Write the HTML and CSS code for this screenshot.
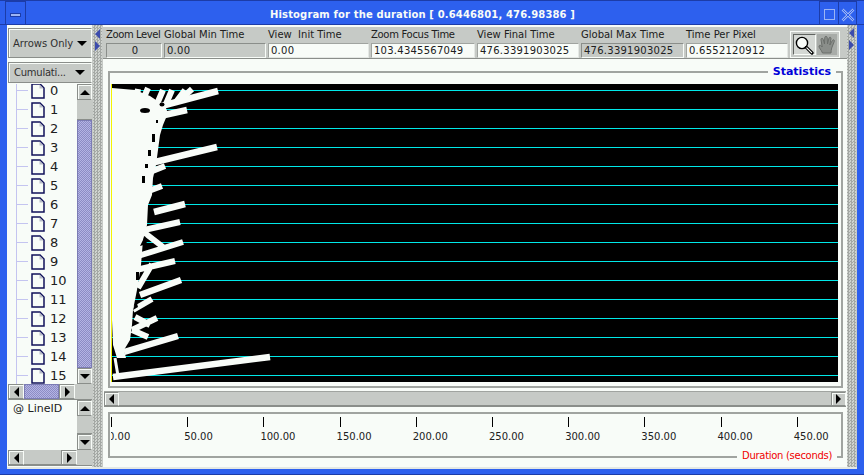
FILE: index.html
```html
<!DOCTYPE html>
<html lang="en">
<head>
<meta charset="utf-8">
<title>Histogram for the duration</title>
<link rel="stylesheet" href="styles.css">
</head>
<body>
<svg class="defs" width="0" height="0">
  <symbol id="file" viewBox="0 0 14 16">
    <path d="M1 .9H9L13 5V15.100H1Z" fill="#f8fcf8" stroke="#10105a" stroke-width="1.500"/>
    <path d="M8.500 1.500 12.500 5.500H8.500Z" fill="#b8bcc8"/>
  </symbol>
</svg>
<div class="window">
  <header class="titlebar">
    <div class="tb-menu"><span class="tb-menu-glyph"></span></div>
    <div class="tb-title">Histogram for the duration [ 0.6446801, 476.98386 ]</div>
    <div class="tb-box"><span class="tb-max"></span></div>
    <div class="tb-box">
      <svg width="14" height="14" viewBox="0 0 14 14"><path d="M1.500 1.500 12.500 12.500M12.500 1.500 1.500 12.500" stroke="#9cb4f4" stroke-width="2.600" fill="none"/><path d="M1.500 1.500 12.500 12.500M12.500 1.500 1.500 12.500" stroke="#2d60ee" stroke-width="1" fill="none"/></svg>
    </div>
  </header>
  <div class="client">
    <aside class="left">
      <div class="combo combo-tall"><span>Arrows Only</span><i class="tri-down big"></i></div>
      <div class="combo combo-short"><span class="cumul">Cumulati...</span><i class="tri-down big"></i></div>
      <div class="pane tree-pane">
        <div class="tree">
          <div class="tree-row"><svg class="fileicon"><use href="#file"/></svg><span>0</span></div>
          <div class="tree-row"><svg class="fileicon"><use href="#file"/></svg><span>1</span></div>
          <div class="tree-row"><svg class="fileicon"><use href="#file"/></svg><span>2</span></div>
          <div class="tree-row"><svg class="fileicon"><use href="#file"/></svg><span>3</span></div>
          <div class="tree-row"><svg class="fileicon"><use href="#file"/></svg><span>4</span></div>
          <div class="tree-row"><svg class="fileicon"><use href="#file"/></svg><span>5</span></div>
          <div class="tree-row"><svg class="fileicon"><use href="#file"/></svg><span>6</span></div>
          <div class="tree-row"><svg class="fileicon"><use href="#file"/></svg><span>7</span></div>
          <div class="tree-row"><svg class="fileicon"><use href="#file"/></svg><span>8</span></div>
          <div class="tree-row"><svg class="fileicon"><use href="#file"/></svg><span>9</span></div>
          <div class="tree-row"><svg class="fileicon"><use href="#file"/></svg><span>10</span></div>
          <div class="tree-row"><svg class="fileicon"><use href="#file"/></svg><span>11</span></div>
          <div class="tree-row"><svg class="fileicon"><use href="#file"/></svg><span>12</span></div>
          <div class="tree-row"><svg class="fileicon"><use href="#file"/></svg><span>13</span></div>
          <div class="tree-row"><svg class="fileicon"><use href="#file"/></svg><span>14</span></div>
          <div class="tree-row"><svg class="fileicon"><use href="#file"/></svg><span>15</span></div>
        </div>
        <div class="vbar">
          <div class="sb-btn"><i class="tri-up"></i></div>
          <div class="sb-gap gap-20"></div>
          <div class="sb-thumb grow"></div>
          <div class="sb-btn"><i class="tri-down"></i></div>
        </div>
      </div>
      <div class="hbar-row">
        <div class="sb-btn h"><i class="tri-left"></i></div>
        <div class="sb-thumb thumb-h"></div>
        <div class="sb-btn h"><i class="tri-right"></i></div>
      </div>
      <div class="pane list-pane">
        <div class="list">@ LineID</div>
        <div class="vbar">
          <div class="sb-btn"><i class="tri-up"></i></div>
          <div class="sb-gap grow"></div>
          <div class="sb-btn"><i class="tri-down"></i></div>
        </div>
      </div>
      <div class="hbar-row">
        <div class="sb-btn h"><i class="tri-left"></i></div>
        <div class="sb-gap grow"></div>
        <div class="sb-btn h"><i class="tri-right"></i></div>
      </div>
    </aside>

    <div class="splitter"><i class="sp-left"></i><i class="sp-right"></i></div>

    <main class="main">
      <section class="toolbar">
        <div class="fields">
          <div class="field"><label class="tight">Zoom Level</label><output class="val gray center">0</output></div>
          <div class="field"><label>Global Min Time</label><output class="val gray">0.00</output></div>
          <div class="field"><label>View&nbsp; Init Time</label><output class="val">0.00</output></div>
          <div class="field"><label class="tight-2">Zoom Focus Time</label><output class="val">103.4345567049</output></div>
          <div class="field"><label>View Final Time</label><output class="val">476.3391903025</output></div>
          <div class="field"><label>Global Max Time</label><output class="val gray">476.3391903025</output></div>
          <div class="field"><label>Time Per Pixel</label><output class="val">0.6552120912</output></div>
        </div>
        <div class="tools">
          <div class="tool tool-on">
            <svg width="20" height="20" viewBox="0 0 20 20"><circle cx="8" cy="8" r="5.600" fill="#f8fcf8" stroke="#000" stroke-width="1.400"/><path d="M12.400 12.400 18 18" stroke="#000" stroke-width="3.200" stroke-linecap="round"/><path d="M12.800 12.800 17.600 17.600" stroke="#f8fcf8" stroke-width="1.200" stroke-linecap="round"/></svg>
          </div>
          <div class="tool tool-off">
            <svg width="20" height="20" viewBox="0 0 20 20"><path d="M5.500 18C4.500 15 1.500 12.500 2 11S4.500 10.500 5.200 12L4 4.500C4 3 6 3 6.300 4.500L7.500 9 7.800 2.500C8 1 10 1 10.200 2.500L10.500 9 12 3C12.500 1.700 14.300 2.200 14 3.700L12.800 10 15.500 5.300C16.300 4.200 17.800 5 17.300 6.300L14.700 13C14.200 15 14 16.500 14 18Z" fill="#8a8e8a" stroke="#6a6e6a" stroke-width="1"/></svg>
          </div>
        </div>
      </section>

      <section class="box stats-box">
        <span class="legend legend-stats">Statistics</span>
        <svg class="chart" width="727" height="298" viewBox="111 84 727 298">
          <rect x="111" y="84" width="727" height="298" fill="#000"/>
          <g stroke="#00e8e8" stroke-width="1">
            <path d="M111 90.500H838M111 109.500H838M111 128.500H838M111 147.500H838M111 166.500H838M111 185.500H838M111 204.500H838M111 223.500H838M111 242.500H838M111 261.500H838M111 280.500H838M111 299.500H838M111 318.500H838M111 337.500H838M111 356.500H838M111 375.500H838"/>
          </g>
          <path d="M112 88 135 90 150 96 165 106 168 113 163 125 160 135 158 150 156 165 153 178 152 195 148 205 147 225 143 240 141 265 137 290 133 310 132 325 130 340 124 350 126 358 117 358 113 345 112 320Z" fill="#f8fcf8"/>
          <g stroke="#f8fcf8" fill="none" stroke-linecap="butt">
            <path stroke-width="6.500" d="M218 91 150 109M187 110 160 116M217 147 155 162M185 204 154 212M181 280 140 295M178 336 124 352M270 357 113 377"/>
            <path stroke-width="6" d="M148 88 141 104M163 90 157 104M172 90 166 104M185 90 176 102M192 89 180 100M138 89 136 102M165 166 150 172M162 186 146 192M180 222 135 232M183 242 138 256M141 230 163 247M175 261 136 270M152 264 138 288M152 299 133 310M157 318 132 330M135 317 150 325M148 337 132 330"/>
            <path stroke-width="3" d="M115 358 118 376"/>
          </g>
          <g fill="#000">
            <ellipse cx="145" cy="110.500" rx="5" ry="2.500"/>
            <ellipse cx="162" cy="104.500" rx="2.500" ry="2"/>
            <rect x="156" y="120" width="2" height="3"/>
            <rect x="152" y="134" width="3" height="8"/>
            <rect x="148" y="150" width="3" height="6"/>
            <rect x="145" y="164" width="3" height="4"/>
            <rect x="142" y="176" width="3" height="7"/>
            <rect x="136" y="272" width="3" height="8"/>
            <path d="M145 236 140 246 147 244Z"/>
            <path d="M136 300 133 310 138 307Z"/>
          </g>
          <rect x="111" y="84" width="1" height="298" fill="#f4f400"/>
        </svg>
      </section>

      <div class="hbar-main">
        <div class="sb-btn h wide"><i class="tri-left"></i></div>
        <div class="sb-gap grow"></div>
        <div class="sb-btn h wide"><i class="tri-right"></i></div>
      </div>

      <section class="box axis-box">
        <span class="legend legend-axis">Duration (seconds)</span>
        <div class="axis">
          <div class="tick"><b></b><span>0.00</span></div>
          <div class="tick"><b></b><span>50.00</span></div>
          <div class="tick"><b></b><span>100.00</span></div>
          <div class="tick"><b></b><span>150.00</span></div>
          <div class="tick"><b></b><span>200.00</span></div>
          <div class="tick"><b></b><span>250.00</span></div>
          <div class="tick"><b></b><span>300.00</span></div>
          <div class="tick"><b></b><span>350.00</span></div>
          <div class="tick"><b></b><span>400.00</span></div>
          <div class="tick"><b></b><span>450.00</span></div>
        </div>
      </section>
    </main>

    <div class="splitter splitter-r"><i class="sp-left"></i><i class="sp-right"></i></div>
  </div>
</div>
</body>
</html>
```

FILE: styles.css
```css
* { box-sizing: border-box; }
html, body { margin: 0; padding: 0; }
body { width: 864px; height: 475px; overflow: hidden; background: #2d60ee; font-family: "DejaVu Sans", sans-serif; font-size: 10px; color: #000; }
.defs { display: block; height: 0; }
.window { width: 864px; height: 475px; display: flex; flex-direction: column; background: #2d60ee; border-bottom: 1px solid #1c3ca8; }
.titlebar { height: 25px; flex: none; display: flex; border-top: 1px solid #1c3ca8; border-bottom: 1px solid #1c3ca8; padding: 0 7px 0 5px; }
.tb-menu { width: 21px; flex: none; border-left: 1px solid #1c3ca8; border-right: 1px solid #1c3ca8; display: flex; align-items: center; justify-content: center; padding-top: 4px; box-shadow: inset 0 4px 0 -3px #1c3ca8; }
.tb-menu-glyph { width: 11px; height: 4px; background: #9cb4f4; border: 1px solid #1c3ca8; }
.tb-title { flex: 1; text-align: center; color: #f8fcf8; font-weight: 700; font-size: 10px; letter-spacing: .14px; line-height: 28px; }
.tb-box { width: 19px; flex: none; border-left: 1px solid #1c3ca8; display: flex; align-items: center; justify-content: center; padding-top: 4px; box-shadow: inset 0 4px 0 -3px #1c3ca8; }
.tb-box:last-child { border-right: 1px solid #1c3ca8; }
.tb-max { width: 11px; height: 11px; border: 1px solid #9cb4f4; }
.client { flex: 1; min-height: 0; margin: 0 7px 5px; display: flex; background: #f8fcf8; border-bottom: 2px solid #e4e8e4; }
.left { width: 86px; flex: none; padding: 3px 0 0 1px; display: flex; flex-direction: column; border-right: 1px solid #c6cac6; background: #f8fcf8; }
.combo { width: 84px; flex: none; background: #c6cac6; border: 1px solid #8a8e8a; border-right-color: #f8fcf8; box-shadow: inset 1px 1px 0 #f8fcf8; display: flex; align-items: center; justify-content: space-between; padding: 0 4px 0 4px; color: #303030; }
.cumul { letter-spacing: -.25px; margin-left: 1px; }
.combo-tall { height: 30px; margin-bottom: 4px; }
.combo-short { height: 21px; margin-bottom: 1px; padding-right: 6px; }
.tri-down, .tri-up, .tri-left, .tri-right { display: block; width: 0; height: 0; border-style: solid; border-color: transparent; }
.tri-down { border-width: 5px 5px 0; border-top-color: #000; }
.tri-down.big { border-width: 5px 5.500px 0; }
.tri-up { border-width: 0 5px 5px; border-bottom-color: #000; }
.tri-left { border-width: 5px 5px 5px 0; border-right-color: #000; }
.tri-right { border-width: 5px 0 5px 5px; border-left-color: #000; }
.pane { display: flex; flex: none; width: 84px; overflow: hidden; }
.tree-pane { height: 300px; }
.list-pane { height: 50px; }
.tree { flex: 1; min-width: 0; overflow: hidden; }
.tree-row { height: 19px; display: flex; align-items: center; padding-left: 23px; font-size: 13px; color: #202020; background: linear-gradient(#c4c4f0, #c4c4f0) 8px 0 / 1px 100% no-repeat, linear-gradient(#c4c4f0, #c4c4f0) 8px 9px / 12px 1px no-repeat; }
.tree-row:first-child { margin-top: -3px; }
.fileicon { width: 14px; height: 16px; flex: none; margin-right: 5px; }
.vbar { width: 15px; flex: none; display: flex; flex-direction: column; background: #c6cac6; }
.sb-btn { width: 15px; height: 16px; flex: none; background: #c6cac6; border: 1px solid #8a8e8a; border-right-color: #f8fcf8; box-shadow: inset 1px 1px 0 #f8fcf8; display: flex; align-items: center; justify-content: center; }
.sb-btn.h { width: 16px; height: 15px; }
.sb-btn.h.wide { width: 15px; }
.sb-gap { background: #c6cac6; border-bottom: 1px solid #8a8e8a; flex: none; }
.gap-20 { height: 20px; }
.grow { flex: 1; min-width: 0; }
.sb-thumb { background: repeating-conic-gradient(#b4b4e4 0 25%, #8c8cc4 0 50%) 0 0 / 2px 2px; border: 1px solid #7c7cb4; flex: none; }
.sb-thumb.grow { flex: 1; }
.thumb-h { width: 35px; }
.hbar-row { height: 16px; width: 84px; flex: none; display: flex; background: #c6cac6; border-bottom: 1px solid #8a8e8a; padding-right: 15px; }
.list { flex: 1; padding: 1px 0 0 5px; font-size: 11px; color: #202020; line-height: 15px; }
.splitter { width: 10px; flex: none; background: repeating-conic-gradient(#a4a8a4 0 25%, #d0d4d0 0 50%) 0 0 / 3px 3px; padding: 4px 0 0 2px; border-right: 1px solid #c6cac6; display: flex; flex-direction: column; gap: 2px; }
.splitter-r { padding-top: 3px; }
.sp-left, .sp-right { display: block; width: 0; height: 0; border-style: solid; border-color: transparent; }
.sp-left { border-width: 5px 5px 5px 0; border-right-color: #3c4cac; }
.sp-right { border-width: 5px 0 5px 5px; border-left-color: #3c4cac; }
.main { flex: 1; min-width: 0; display: flex; flex-direction: column; padding-top: 2px; }
.toolbar { height: 32px; flex: none; background: #c6cac6; display: flex; padding: 0 0 0 3px; margin-bottom: 12px; border-bottom: 1px solid #8a8e8a; }
.fields { display: grid; grid-template-columns: 56px 102px 101px 104px 102px 103px 102px; column-gap: 2px; flex: none; }
.field { display: flex; flex-direction: column; min-width: 0; }
.field label { height: 16px; line-height: 16px; white-space: nowrap; color: #202020; }
.field label.tight { letter-spacing: -.4px; }
.field label.tight-2 { letter-spacing: -.3px; }
.val { height: 15px; display: block; background: #f8fcf8; border: 1px solid #e4e8e4; border-top-color: #a0a4a0; border-left-color: #a0a4a0; line-height: 13px; padding-left: 2px; letter-spacing: .25px; color: #202020; }
.val.gray { background: #c6cac6; border-color: #8a8e8a; border-right-color: #f8fcf8; border-bottom-color: #f8fcf8; }
.val.center { text-align: center; }
.tools { margin: 4px 0 0 2px; width: 50px; height: 27px; flex: none; display: flex; padding: 2px; gap: 1px; border: 1px solid #f8fcf8; background: #c6cac6; }
.tool { flex: 1; display: flex; align-items: center; justify-content: center; }
.tool-on { background: #d4d8d4; border: 1px solid #606460; border-right-color: #f8fcf8; border-bottom-color: #f8fcf8; }
.tool-off { background: #a8aca8; }
.box { position: relative; margin: 0 4px 0 5px; border: 2px solid #a0a4a0; background: #f8fcf8; flex: none; }
.stats-box { height: 317px; padding: 11px 0 0 1px; }
.legend { position: absolute; background: #f8fcf8; padding: 0 5px; white-space: nowrap; line-height: 14px; }
.legend-stats { top: -8px; right: 5px; color: #0000d8; font-weight: 700; font-size: 11px; }
.legend-axis { bottom: -7px; right: 4px; color: #f00000; letter-spacing: -.3px; }
.chart { display: block; }
.hbar-main { height: 16px; margin: 3px 1px 5px 1px; flex: none; display: flex; background: #c6cac6; border-top: 1px solid #a0a4a0; border-bottom: 1px solid #8a8e8a; }
.hbar-main .sb-btn { height: 14px; }
.axis-box { height: 46px; padding: 3px 0 0 1px; }
.axis { width: 727px; display: flex; overflow: hidden; height: 28px; }
.tick { width: 76.200px; flex: none; display: flex; flex-direction: column; }
.tick b { display: block; width: 1px; height: 10px; background: #000; flex: none; }
.tick span { margin: 4px 0 0 -3px; line-height: 12px; white-space: nowrap; font-size: 10px; color: #202020; }
```
